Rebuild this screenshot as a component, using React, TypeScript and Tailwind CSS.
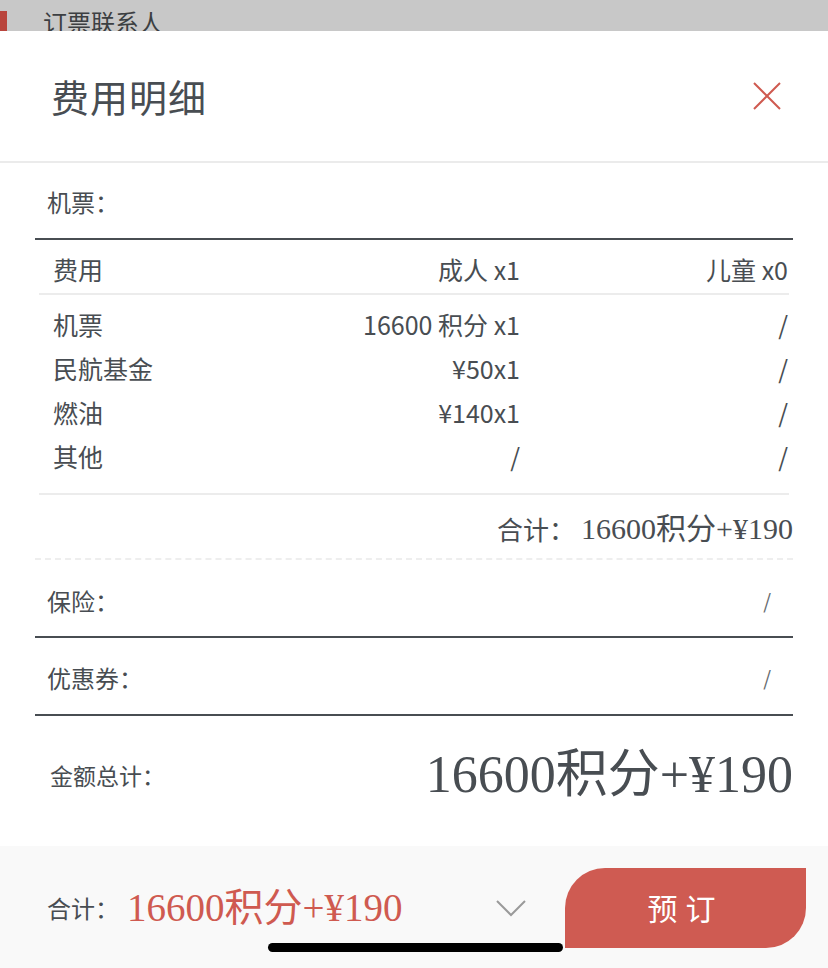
import React from 'react';

const sans = "font-[family-name:'Noto_Sans_CJK_SC','Noto_Sans',sans-serif]";
const serif = "font-[family-name:'Liberation_Serif','Noto_Sans_CJK_SC',serif]";

const rows = [
  { name: '机票', adult: '16600 积分 x1', child: '/' },
  { name: '民航基金', adult: '¥50x1', child: '/' },
  { name: '燃油', adult: '¥140x1', child: '/' },
  { name: '其他', adult: '/', child: '/' },
];

export default function App() {
  return (
    <div className={`relative w-[828px] h-[968px] overflow-hidden bg-white text-[#484d52] ${sans}`}>
      {/* 背后的页面 */}
      <div className="h-[31px] bg-[#c8c8c8] flex items-start overflow-hidden">
        <div className="w-[7px] h-[20px] mt-[11px] bg-[#b9453d]" />
        <span className="ml-[36px] mt-[10px] text-[24px] leading-none text-[#3c3f42]">订票联系人</span>
      </div>

      {/* 标题栏 */}
      <div className="h-[130px] flex items-center justify-between pl-[51px] pr-[46px]">
        <h1 className="text-[38px] font-normal leading-none tracking-[1px]">费用明细</h1>
        <svg width="30" height="30" viewBox="0 0 30 30" className="text-[#cf5a50]">
          <path d="M2 2 28 28M28 2 2 28" stroke="currentColor" strokeWidth="2" fill="none" />
        </svg>
      </div>
      <div className="h-[2px] bg-[#ebebeb]" />

      <div className="mx-[35px]">
        <div className="h-[75px] flex items-center pl-[12px] text-[24px] pt-[3px]">机票：</div>
        <div className="h-[2px] bg-[#484d52]" />

        {/* 费用表 */}
        <div className="mx-[4px]">
          <div className="h-[53px] grid grid-cols-[200px_267px_1fr] items-center pl-[14px] pr-[1px] pt-[6px] text-[25px]">
            <span>费用</span>
            <span className="text-right">成人 x1</span>
            <span className="text-right">儿童 x0</span>
          </div>
          <div className="h-[2px] bg-[#ececec]" />
          <div className="pt-[8px] pb-[14px]">
            {rows.map((r) => (
              <div
                key={r.name}
                className="h-[44px] grid grid-cols-[200px_267px_1fr] items-center pl-[14px] pr-[1px] text-[25px]"
              >
                <span>{r.name}</span>
                <span className="text-right">{r.adult}</span>
                <span className="text-right">{r.child}</span>
              </div>
            ))}
          </div>
          <div className="h-[2px] bg-[#ececec]" />
        </div>

        <div className="h-[63px] flex items-center justify-end pt-[4px]">
          <span className="text-[26px]">合计：</span>
          <span className={`${serif} text-[30px] ml-[6px]`}>16600积分+¥190</span>
        </div>
        <div className="border-t-2 border-dashed border-[#eeeeee]" />

        <div className="h-[76px] flex items-center justify-between pl-[12px] pr-[22px] pt-[6px] text-[24px]">
          <span>保险：</span>
          <span className="text-[20px] text-[#666a6e]">/</span>
        </div>
        <div className="h-[2px] bg-[#484d52]" />

        <div className="h-[76px] flex items-center justify-between pl-[12px] pr-[22px] pt-[4px] text-[24px]">
          <span>优惠券：</span>
          <span className="text-[20px] text-[#666a6e]">/</span>
        </div>
        <div className="h-[2px] bg-[#484d52]" />

        <div className="h-[130px] flex items-center justify-between pl-[15px] pb-[12px]">
          <span className="text-[23px]">金额总计：</span>
          <span className={`${serif} text-[52px] leading-none`}>16600积分+¥190</span>
        </div>
      </div>

      {/* 底部栏 */}
      <div className="h-[123px] bg-[#f9f9f9] flex items-center pl-[47px] pr-[22px]">
        <span className="text-[24px]">合计：</span>
        <span className={`${serif} text-[39px] text-[#cf5a50] ml-[8px] leading-none`}>16600积分+¥190</span>
        <svg width="32" height="18" viewBox="0 0 32 18" className="ml-auto mr-[38px] text-[#9a9a9a]">
          <path d="M2 2 16 16 30 2" stroke="currentColor" strokeWidth="2" fill="none" />
        </svg>
        <button className="w-[241px] h-[80px] bg-[#cf5b52] text-white text-[30px] tracking-[8px] rounded-tl-[40px] rounded-br-[40px]">
          预订
        </button>
      </div>

      {/* Home 指示条 */}
      <div className="absolute left-[268px] top-[943px] w-[295px] h-[9px] rounded-full bg-black" />
    </div>
  );
}
